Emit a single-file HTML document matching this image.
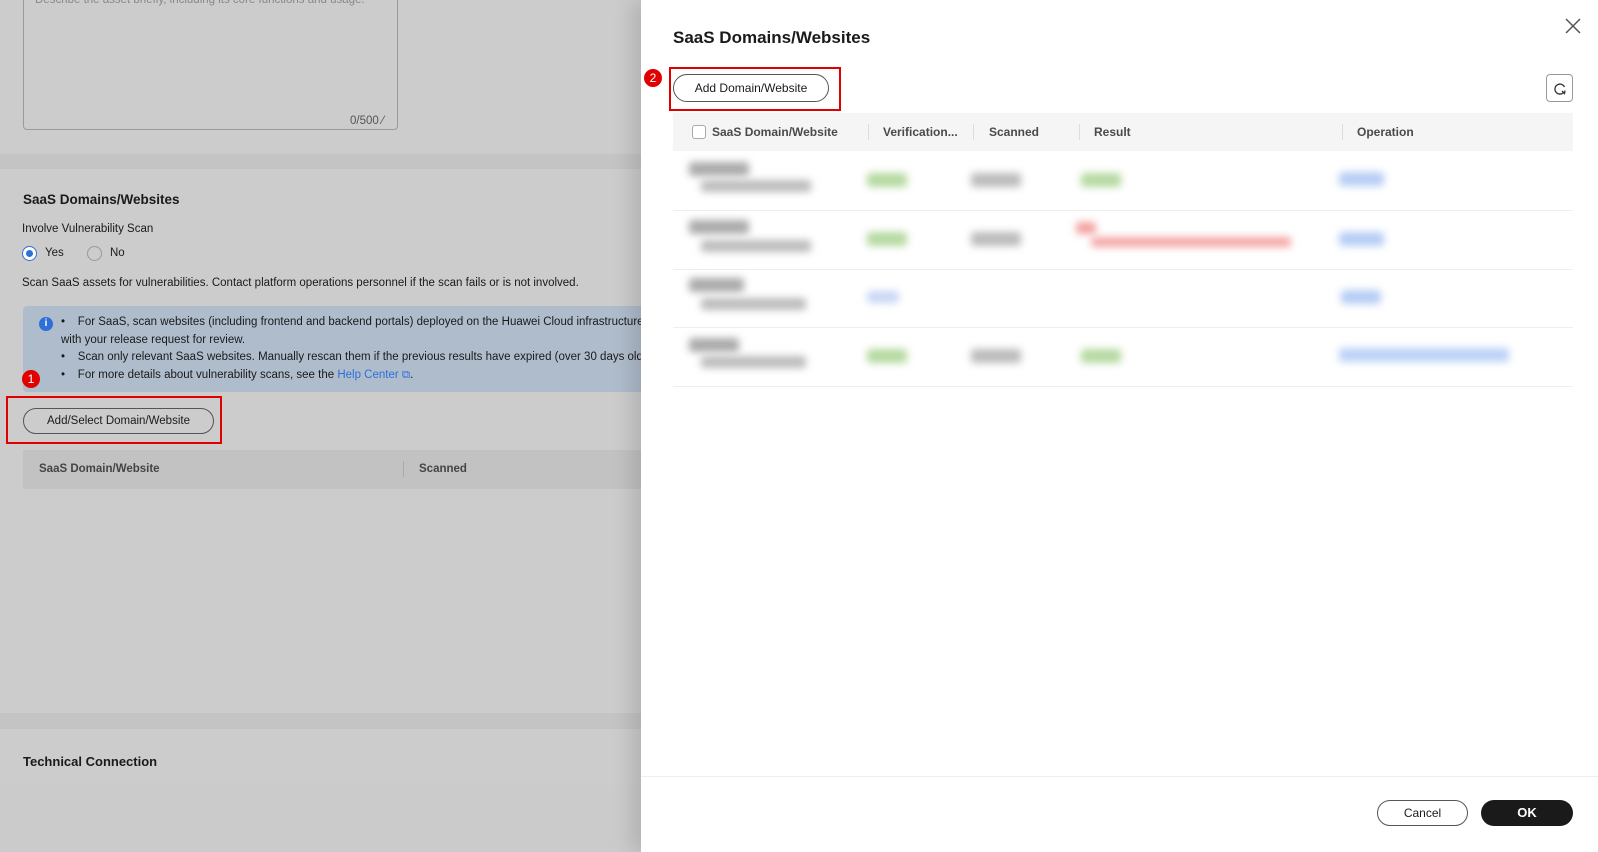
<!DOCTYPE html>
<html><head><meta charset="utf-8"><style>
*{box-sizing:border-box;margin:0;padding:0}
body{width:1598px;height:852px;overflow:hidden;position:relative;font-family:"Liberation Sans",Arial,sans-serif;background:#c4c4c4;color:#1a1a1a;font-size:12px}
.abs{position:absolute}
.card{position:absolute;left:0;width:660px;background:#cccccc;border-radius:0 8px 8px 0;font-size:11.5px}
.panel{position:absolute;left:641px;top:0;width:957px;height:852px;background:#fff;box-shadow:-10px 0 18px rgba(0,0,0,.12)}
.btn{position:absolute;border:1px solid #555;border-radius:14px;background:transparent;text-align:center;font-size:12px;color:#1a1a1a}
.card .btn{font-size:11.5px}
.red{position:absolute;border:2px solid #e00000}
.badge{position:absolute;width:18px;height:18px;border-radius:50%;background:#e00000;color:#fff;font-size:12px;text-align:center;line-height:18px}
.th{position:absolute;top:0;height:38px;line-height:38px;font-weight:bold;color:#4a4a4a;font-size:12px}
.div{position:absolute;top:11px;width:1px;height:16px;background:#ddd}
.bl{position:absolute;filter:blur(4px);border-radius:3px}
</style></head><body>
<div class="card" style="top:0;height:154px">
  <div class="abs" style="left:23px;top:-4px;width:375px;height:134px;border:1px solid #9a9a9a;border-radius:4px"></div>
  <div class="abs" style="left:35px;top:-6px;color:#888">Describe the asset briefly, including its core functions and usage.</div>
  <div class="abs" style="left:350px;top:115px;color:#555">0/500 ⁄</div>
</div>
<div class="card" style="top:169px;height:544px">
  <div class="abs" style="left:23px;top:23px;font-size:13.5px;font-weight:bold">SaaS Domains/Websites</div>
  <div class="abs" style="left:22px;top:54px">Involve Vulnerability Scan</div>
  <div class="abs" style="left:22px;top:77px;width:15px;height:15px;border:1px solid #2f6fd8;border-radius:50%;background:#fff"><div style="margin:3px;width:7px;height:7px;border-radius:50%;background:#2f6fd8"></div></div>
  <div class="abs" style="left:45px;top:78px">Yes</div>
  <div class="abs" style="left:87px;top:77px;width:15px;height:15px;border:1px solid #999;border-radius:50%"></div>
  <div class="abs" style="left:110px;top:78px">No</div>
  <div class="abs" style="left:22px;top:108px">Scan SaaS assets for vulnerabilities. Contact platform operations personnel if the scan fails or is not involved.</div>
  <div class="abs" style="left:23px;top:137px;width:637px;height:86px;background:#afbccc;border-radius:4px;overflow:hidden;line-height:17.5px">
    <div class="abs" style="left:16px;top:11px;width:14px;height:14px;border-radius:50%;background:#2f6fd8;color:#fff;font-size:10px;text-align:center;line-height:14px;font-weight:bold">i</div>
    <div class="abs" style="left:38px;top:8px;white-space:nowrap">•&nbsp;&nbsp;&nbsp; For SaaS, scan websites (including frontend and backend portals) deployed on the Huawei Cloud infrastructure<br>with your release request for review.<br>•&nbsp;&nbsp;&nbsp; Scan only relevant SaaS websites. Manually rescan them if the previous results have expired (over 30 days old).<br>•&nbsp;&nbsp;&nbsp; For more details about vulnerability scans, see the <span style="color:#2f6fd8">Help Center ⧉</span>.</div>
  </div>
  <div class="btn" style="left:23px;top:239px;width:191px;height:26px;line-height:24px">Add/Select Domain/Website</div>
  <div class="red" style="left:6px;top:227px;width:216px;height:48px"></div>
  <div class="badge" style="left:22px;top:201px">1</div>
  <div class="abs" style="left:23px;top:281px;width:637px;height:39px;background:#c2c2c2">
    <div class="th" style="left:16px;line-height:39px;color:#444;font-size:11.5px">SaaS Domain/Website</div>
    <div class="div" style="left:380px;background:#aaa"></div>
    <div class="th" style="left:396px;line-height:39px;color:#444;font-size:11.5px">Scanned</div>
  </div>
</div>
<div class="card" style="top:729px;height:56px">
  <div class="abs" style="left:23px;top:25px;font-size:13px;font-weight:bold">Technical Connection</div>
</div>
<div class="abs" style="left:0;top:785px;width:660px;height:67px;background:#cbcbcb"></div>

<div class="panel">
  <div class="abs" style="left:32px;top:28px;font-size:17px;font-weight:bold">SaaS Domains/Websites</div>
  <svg class="abs" style="left:924px;top:18px" width="16" height="16" viewBox="0 0 16 16"><path d="M1 1L15 15M15 1L1 15" stroke="#555" stroke-width="1.5"/></svg>
  <div class="btn" style="left:32px;top:74px;width:156px;height:28px;line-height:26px">Add Domain/Website</div>
  <div class="red" style="left:28px;top:67px;width:172px;height:44px"></div>
  <div class="badge" style="left:3px;top:69px">2</div>
  <div class="abs" style="left:905px;top:74px;width:27px;height:28px;border:1px solid #999;border-radius:4px">
    <svg style="position:absolute;left:6px;top:7px" width="14" height="14" viewBox="0 0 14 14"><path d="M11.5 5A5 5 0 1 0 11 10" fill="none" stroke="#333" stroke-width="1.3"/><path d="M9 9L11.5 11.5L12 8.5" fill="none" stroke="#333" stroke-width="1.3"/></svg>
  </div>
  <div class="abs" style="left:32px;top:113px;width:900px;height:38px;background:#f5f5f5">
    <div class="abs" style="left:19px;top:12px;width:14px;height:14px;border:1px solid #aaa;border-radius:3px;background:#fff"></div>
    <div class="th" style="left:39px">SaaS Domain/Website</div>
    <div class="div" style="left:195px"></div>
    <div class="th" style="left:210px">Verification...</div>
    <div class="div" style="left:300px"></div>
    <div class="th" style="left:316px">Scanned</div>
    <div class="div" style="left:406px"></div>
    <div class="th" style="left:421px">Result</div>
    <div class="div" style="left:669px"></div>
    <div class="th" style="left:684px">Operation</div>
  </div>
  <div class="abs" style="left:32px;top:210px;width:900px;height:1px;background:#eee"></div>
  <div class="abs" style="left:32px;top:269px;width:900px;height:1px;background:#eee"></div>
  <div class="abs" style="left:32px;top:327px;width:900px;height:1px;background:#eee"></div>
  <div class="abs" style="left:32px;top:386px;width:900px;height:1px;background:#eee"></div>
  <!-- blurred rows -->
  <div class="bl" style="left:48px;top:162px;width:60px;height:14px;background:#aaa"></div>
  <div class="bl" style="left:60px;top:180px;width:110px;height:12px;background:#bbb"></div>
  <div class="bl" style="left:226px;top:173px;width:40px;height:14px;background:#b5d9a0"></div>
  <div class="bl" style="left:330px;top:173px;width:50px;height:14px;background:#bbb"></div>
  <div class="bl" style="left:440px;top:173px;width:40px;height:14px;background:#b5d9a0"></div>
  <div class="bl" style="left:698px;top:172px;width:45px;height:14px;background:#b6cdf5"></div>
  <div class="bl" style="left:48px;top:220px;width:60px;height:14px;background:#aaa"></div>
  <div class="bl" style="left:60px;top:240px;width:110px;height:12px;background:#bbb"></div>
  <div class="bl" style="left:226px;top:232px;width:40px;height:14px;background:#b5d9a0"></div>
  <div class="bl" style="left:330px;top:232px;width:50px;height:14px;background:#bbb"></div>
  <div class="bl" style="left:435px;top:222px;width:20px;height:12px;background:#f4a0a0"></div>
  <div class="bl" style="left:450px;top:237px;width:200px;height:10px;background:#f5a5a5"></div>
  <div class="bl" style="left:698px;top:232px;width:45px;height:14px;background:#b6cdf5"></div>
  <div class="bl" style="left:48px;top:278px;width:55px;height:14px;background:#aaa"></div>
  <div class="bl" style="left:60px;top:298px;width:105px;height:12px;background:#bbb"></div>
  <div class="bl" style="left:226px;top:291px;width:32px;height:12px;background:#c8d6f5"></div>
  <div class="bl" style="left:700px;top:290px;width:40px;height:14px;background:#b6cdf5"></div>
  <div class="bl" style="left:48px;top:338px;width:50px;height:14px;background:#aaa"></div>
  <div class="bl" style="left:60px;top:356px;width:105px;height:12px;background:#bbb"></div>
  <div class="bl" style="left:226px;top:349px;width:40px;height:14px;background:#b5d9a0"></div>
  <div class="bl" style="left:330px;top:349px;width:50px;height:14px;background:#bbb"></div>
  <div class="bl" style="left:440px;top:349px;width:40px;height:14px;background:#b5d9a0"></div>
  <div class="bl" style="left:698px;top:348px;width:170px;height:14px;background:#bcd2f7"></div>
  <div class="abs" style="left:0;top:776px;width:957px;height:1px;background:#eee"></div>
  <div class="btn" style="left:736px;top:800px;width:91px;height:26px;line-height:24px">Cancel</div>
  <div class="abs" style="left:840px;top:800px;width:92px;height:26px;line-height:26px;border-radius:14px;background:#1a1a1a;color:#fff;text-align:center;font-weight:bold;font-size:13px">OK</div>
</div>
</body></html>
